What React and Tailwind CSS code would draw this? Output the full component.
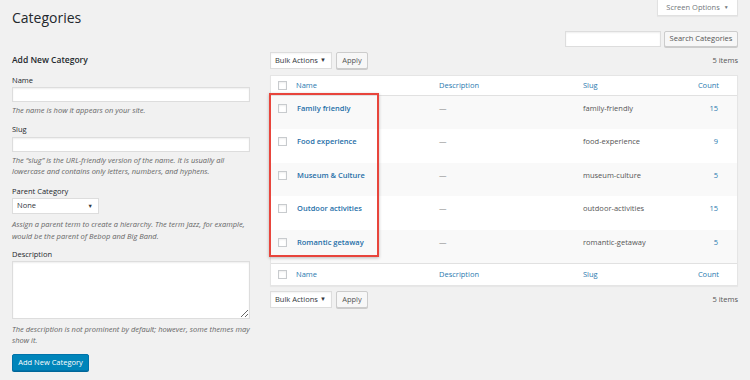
import React from 'react';

const ROWS = [
  { name: 'Family friendly', slug: 'family-friendly', count: 15 },
  { name: 'Food experience', slug: 'food-experience', count: 9 },
  { name: 'Museum & Culture', slug: 'museum-culture', count: 5 },
  { name: 'Outdoor activities', slug: 'outdoor-activities', count: 15 },
  { name: 'Romantic getaway', slug: 'romantic-getaway', count: 5 },
];

function Check() {
  return <div className="w-[9px] h-[9px] border border-[#c8cbce] bg-white shadow-[inset_0_1px_2px_rgba(0,0,0,0.07)]" />;
}

function BulkBar({ className }) {
  return (
    <div className={`flex items-center justify-between ${className}`}>
      <div className="flex items-center gap-[4px]">
        <div className="w-[62px] h-[17px] bg-white border border-[#ddd] shadow-[inset_0_1px_2px_rgba(0,0,0,0.05)] flex items-center justify-between pl-[4px] pr-[5px] text-[7.5px] text-[#32373c]">
          <span>Bulk Actions</span>
          <span className="text-[6px]">▼</span>
        </div>
        <div className="w-[32px] h-[17px] bg-[#f7f7f7] border border-[#ccc] rounded-[2px] shadow-[0_1px_0_#ccc] flex items-center justify-center text-[7.5px] text-[#555]">
          Apply
        </div>
      </div>
      <span className="text-[7.5px] text-[#555]">5 items</span>
    </div>
  );
}

function HeadRow({ className }) {
  return (
    <div className={`flex items-center text-[7.5px] text-[#2a7ab0] ${className}`}>
      <div className="w-[25px] pl-[7px]"><Check /></div>
      <div className="w-[143px]">Name</div>
      <div className="w-[144px]">Description</div>
      <div className="w-[100px]">Slug</div>
      <div className="flex-1 text-right pr-[18px]">Count</div>
    </div>
  );
}

export default function App() {
  return (
    <div className="relative w-[750px] h-[380px] overflow-hidden bg-[#f1f1f1] font-['Open_Sans','Noto_Sans',sans-serif] text-[#23282d]">
      {/* top */}
      <div className="flex justify-between px-[12px] h-[30px]">
        <h1 className="pt-[8px] text-[14px] leading-[20px] font-normal">Categories</h1>
        <div className="w-[81px] h-[16px] bg-white border border-t-0 border-[#e1e1e1] shadow-[0_1px_1px_rgba(0,0,0,0.04)] flex items-center justify-center gap-[4px] text-[7.5px] text-[#72777c]">
          <span>Screen Options</span>
          <span className="text-[5px]">▼</span>
        </div>
      </div>

      <div className="flex gap-[20px] px-[12px]">
        {/* add new form */}
        <div className="w-[238px] flex flex-col">
          <h2 className="mt-[24px] h-[12px] leading-[12px] text-[8.5px] font-semibold">Add New Category</h2>

          <label className="mt-[9px] h-[10px] leading-[10px] text-[7.5px]">Name</label>
          <div className="mt-[2px] h-[15px] bg-white border border-[#ddd] shadow-[inset_0_1px_2px_rgba(0,0,0,0.07)]" />
          <p className="mt-[3px] leading-[11px] text-[7.5px] italic text-[#666]">The name is how it appears on your site.</p>

          <label className="mt-[8px] h-[10px] leading-[10px] text-[7.5px]">Slug</label>
          <div className="mt-[3px] h-[15px] bg-white border border-[#ddd] shadow-[inset_0_1px_2px_rgba(0,0,0,0.07)]" />
          <p className="mt-[3px] leading-[11px] text-[7.5px] italic text-[#666]">
            The “slug” is the URL-friendly version of the name. It is usually all lowercase and contains only letters, numbers, and hyphens.
          </p>

          <label className="mt-[9px] h-[10px] leading-[10px] text-[7.5px]">Parent Category</label>
          <div className="mt-[2px] w-[87px] h-[16px] bg-white border border-[#ddd] flex items-center justify-between pl-[4px] pr-[5px] text-[7.5px] text-[#32373c]">
            <span>None</span>
            <span className="text-[5.5px]">▼</span>
          </div>
          <p className="mt-[4px] leading-[12px] text-[7.5px] italic text-[#666]">
            Assign a parent term to create a hierarchy. The term Jazz, for example, would be the parent of Bebop and Big Band.
          </p>

          <label className="mt-[7px] h-[10px] leading-[10px] text-[7.5px]">Description</label>
          <textarea readOnly className="mt-[2px] h-[58px] bg-white border border-[#ddd] shadow-[inset_0_1px_2px_rgba(0,0,0,0.07)] outline-none" />
          <p className="mt-[5px] leading-[11px] text-[7.5px] italic text-[#666]">
            The description is not prominent by default; however, some themes may show it.
          </p>

          <div className="mt-[8px] w-[77px] h-[17px] rounded-[2px] bg-[#0085ba] border border-[#0073aa] shadow-[0_1px_0_#006799] flex items-center justify-center text-[7.5px] text-white">
            Add New Category
          </div>
        </div>

        {/* list */}
        <div className="flex-1 flex flex-col">
          <div className="mt-[1px] flex justify-end gap-[3px] h-[16px]">
            <div className="w-[96px] bg-white border border-[#ddd] shadow-[inset_0_1px_2px_rgba(0,0,0,0.07)]" />
            <div className="w-[74px] bg-[#f7f7f7] border border-[#ccc] rounded-[2px] shadow-[0_1px_0_#ccc] flex items-center justify-center text-[7.5px] text-[#555]">
              Search Categories
            </div>
          </div>

          <BulkBar className="mt-[5px] h-[17px]" />

          <div className="mt-[6px] bg-white border border-[#e5e5e5] shadow-[0_1px_1px_rgba(0,0,0,0.04)]">
            <HeadRow className="h-[20px] border-b border-[#e1e1e1]" />
            {ROWS.map((r, i) => (
              <div key={r.slug} className={`flex items-start h-[33.4px] pt-[7px] text-[7.5px] leading-[10px] ${i % 2 === 0 ? 'bg-[#f9f9f9]' : 'bg-white'}`}>
                <div className="w-[25px] pl-[7px] pt-[1px]"><Check /></div>
                <div className="w-[143px] pl-[1px] font-semibold text-[#1f6fa8]">{r.name}</div>
                <div className="w-[144px] text-[#888]">—</div>
                <div className="w-[100px] text-[#555]">{r.slug}</div>
                <div className="flex-1 text-right pr-[19px] text-[#2a7ab0]">{r.count}</div>
              </div>
            ))}
            <HeadRow className="h-[22px] border-t border-[#e1e1e1]" />
          </div>

          <BulkBar className="mt-[6px] h-[16px]" />
        </div>
      </div>

      {/* highlight annotation */}
      <div className="absolute left-[269px] top-[93px] w-[110px] h-[164px] border-2 border-[#e8453c] shadow-[0_1px_3px_rgba(0,0,0,0.25)] pointer-events-none" />
    </div>
  );
}
